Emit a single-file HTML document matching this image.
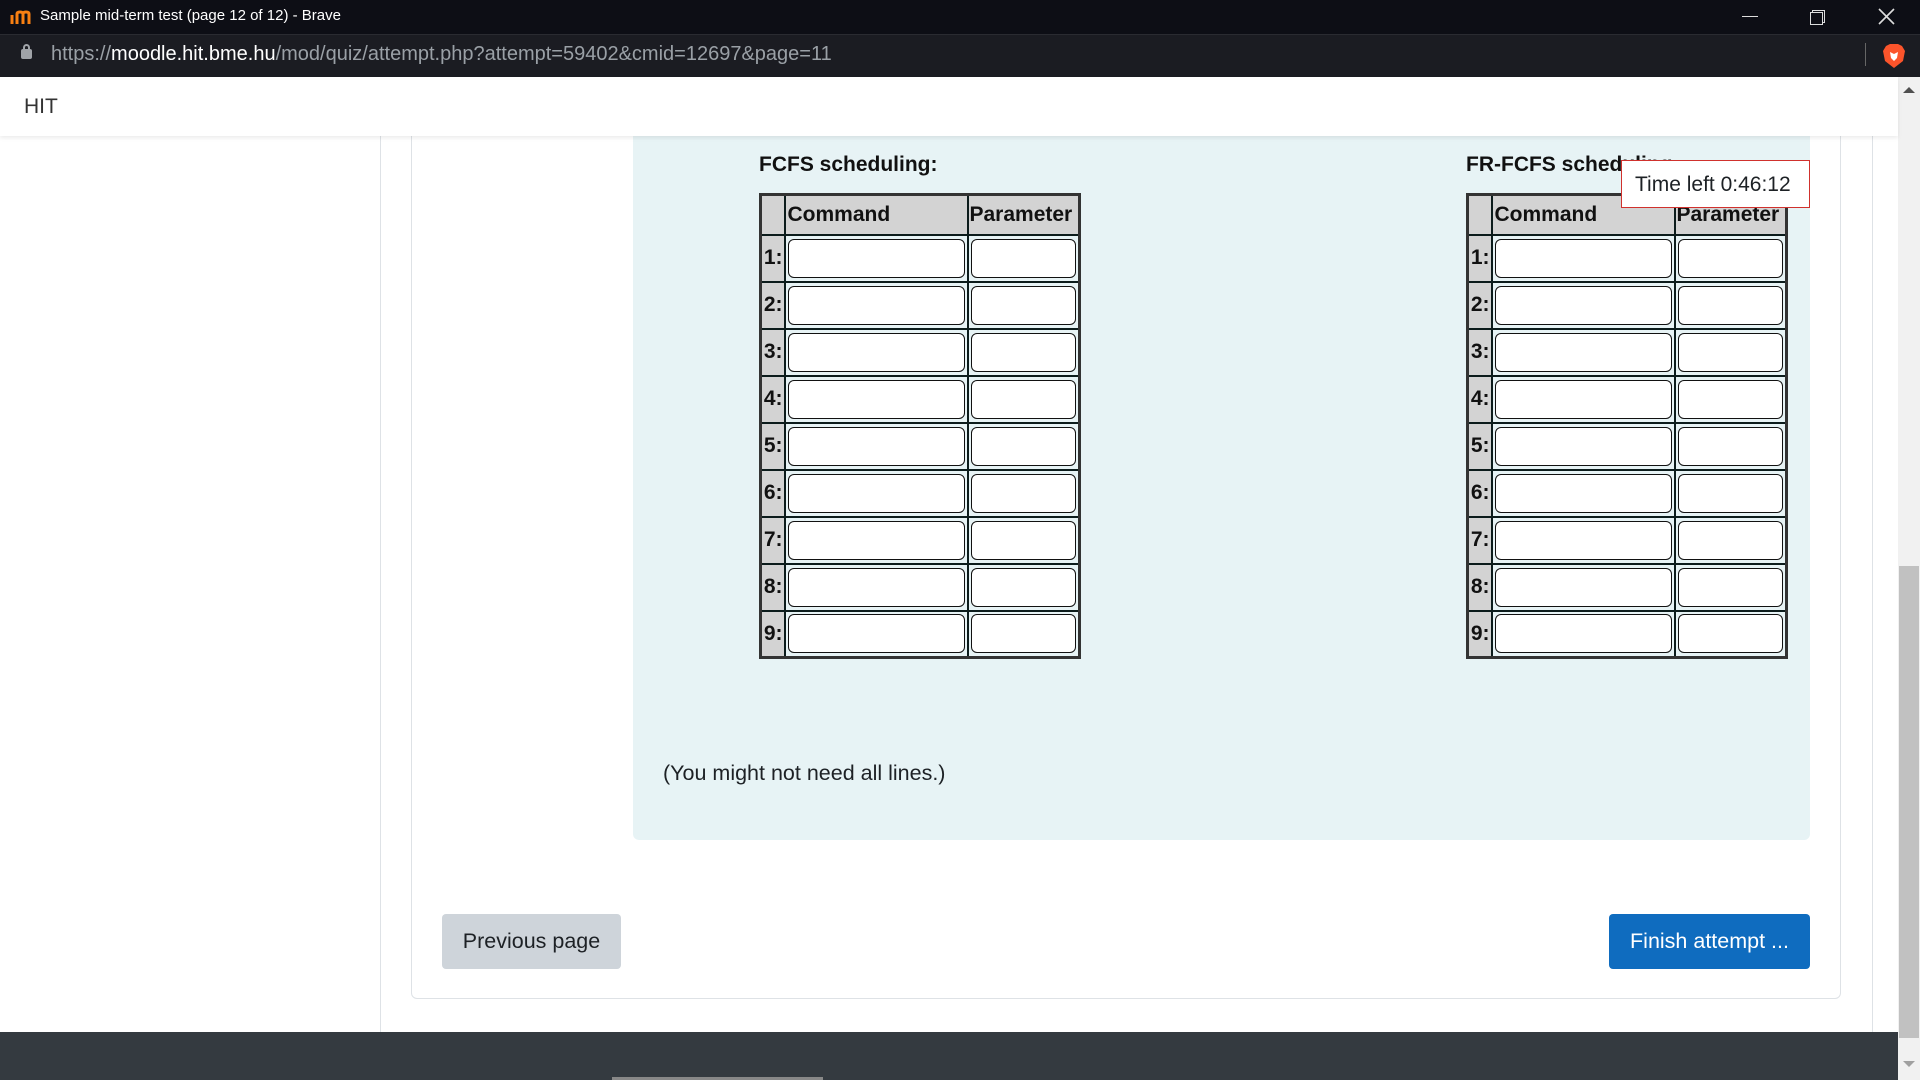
<!DOCTYPE html>
<html><head><meta charset="utf-8"><style>
*{box-sizing:border-box;margin:0;padding:0}
body{width:1920px;height:1080px;overflow:hidden;background:#fff;font-family:"Liberation Sans",sans-serif;position:relative;color:#1d2125}
.abs{position:absolute}
table.t{position:absolute;border-collapse:collapse;table-layout:fixed;border:3px solid #333;background:#e7f3f5}
table.t td,table.t th{border:2px solid #0c1c1c;padding:0}
table.t th{background:#d3d3d3;height:40px;font-size:21px;font-weight:bold;text-align:left;padding-left:2px;color:#111}
table.t td.n{background:#d3d3d3;font-size:21px;font-weight:bold;text-align:right;padding-right:1px;color:#111}
table.t td{height:47px}
.in{display:block;margin:2px 2px;height:39px;background:#fff;border:1.5px solid #111;border-radius:6px}
</style></head><body>
<div class="abs" style="left:0;top:0;width:1920px;height:34px;background:#0d0e15"></div>
<div class="abs" style="left:10px;top:9px;width:22px;height:16px;">
<svg width="22" height="16"><path d="M2 15V6M7 15V5q0-2 3-2t3 2v10M13 15V5q0-2 3-2t3 2v10" stroke="#f98012" stroke-width="3" fill="none"/></svg></div>
<div class="abs" style="left:40px;top:7px;color:#fff;font-size:15px">Sample mid-term test (page 12 of 12) - Brave</div>
<div class="abs" style="left:1742px;top:16px;width:16px;height:1px;background:#ddd"></div>
<div class="abs" style="left:1812px;top:10px;width:13px;height:13px;border:1.5px solid #ddd"></div>
<div class="abs" style="left:1810px;top:12px;width:13px;height:13px;border:1.5px solid #ddd;background:#0d0e15"></div>
<svg class="abs" style="left:1878px;top:8px" width="17" height="17"><path d="M1 1L16 16M16 1L1 16" stroke="#ddd" stroke-width="1.6"/></svg>
<div class="abs" style="left:0;top:34px;width:1920px;height:43px;background:#1b1c22;border-top:1px solid #2a2b31"></div>
<div class="abs" style="left:21px;top:49px;width:11px;height:10px;background:#a0a3a8;border-radius:2px"></div>
<div class="abs" style="left:23px;top:44px;width:7px;height:8px;border:2px solid #a0a3a8;border-bottom:none;border-radius:4px 4px 0 0"></div>
<div class="abs" style="left:51px;top:43px;font-size:20px;color:#9aa0a6">https://<span style="color:#fff">moodle.hit.bme.hu</span>/mod/quiz/attempt.php?attempt=59402&amp;cmid=12697&amp;page=11</div>
<div class="abs" style="left:1865px;top:43px;width:1px;height:23px;background:#666"></div>
<svg class="abs" style="left:1882px;top:43px" width="24" height="26"><path d="M4 3L8 1H16L20 3L23 8L21 18L12 25L3 18L1 8Z" fill="#fb542b"/><path d="M8 9l4 2 4-2-1 6-3 3-3-3z" fill="#fff"/></svg>
<div class="abs" style="left:0;top:77px;width:1898px;height:59px;background:#fff;box-shadow:0 2px 4px rgba(0,0,0,.08);z-index:2"></div>
<div class="abs" style="left:24px;top:95px;font-size:21px;color:#333;z-index:3">HIT</div>
<div class="abs" style="left:1898px;top:77px;width:22px;height:1003px;background:#f1f1f1"></div>
<div class="abs" style="left:1899px;top:566px;width:20px;height:472px;background:#c1c1c1"></div>
<svg class="abs" style="left:1903px;top:86px" width="12" height="8"><path d="M0 7L6 1L12 7Z" fill="#505050"/></svg>
<svg class="abs" style="left:1903px;top:1060px" width="12" height="8"><path d="M0 1L6 7L12 1Z" fill="#a0a0a0"/></svg>
<div class="abs" style="left:380px;top:136px;width:1px;height:896px;background:#dee2e6"></div>
<div class="abs" style="left:1872px;top:136px;width:1px;height:896px;background:#dee2e6"></div>
<div class="abs" style="left:411px;top:120px;width:1430px;height:879px;border:1px solid #dee2e6;border-radius:6px"></div>
<div class="abs" style="left:633px;top:120px;width:1177px;height:720px;background:#e7f3f5;border-radius:0 0 6px 6px"></div>
<div class="abs" style="left:759px;top:153px;font-size:21px;font-weight:bold;color:#111">FCFS scheduling:</div>
<div class="abs" style="left:1466px;top:153px;font-size:21px;font-weight:bold;color:#111">FR-FCFS scheduling:</div>

<table class="t" style="left:759px;top:193px;width:322px">
<colgroup><col style="width:24px"><col style="width:183px"><col></colgroup>
<tr><th></th><th>Command</th><th style="padding-left:1px">Parameter</th></tr>
<tr><td class="n">1:</td><td><span class="in"></span></td><td><span class="in"></span></td></tr>
<tr><td class="n">2:</td><td><span class="in"></span></td><td><span class="in"></span></td></tr>
<tr><td class="n">3:</td><td><span class="in"></span></td><td><span class="in"></span></td></tr>
<tr><td class="n">4:</td><td><span class="in"></span></td><td><span class="in"></span></td></tr>
<tr><td class="n">5:</td><td><span class="in"></span></td><td><span class="in"></span></td></tr>
<tr><td class="n">6:</td><td><span class="in"></span></td><td><span class="in"></span></td></tr>
<tr><td class="n">7:</td><td><span class="in"></span></td><td><span class="in"></span></td></tr>
<tr><td class="n">8:</td><td><span class="in"></span></td><td><span class="in"></span></td></tr>
<tr><td class="n">9:</td><td><span class="in"></span></td><td><span class="in"></span></td></tr>
</table>
<table class="t" style="left:1466px;top:193px;width:322px">
<colgroup><col style="width:24px"><col style="width:183px"><col></colgroup>
<tr><th></th><th>Command</th><th style="padding-left:1px">Parameter</th></tr>
<tr><td class="n">1:</td><td><span class="in"></span></td><td><span class="in"></span></td></tr>
<tr><td class="n">2:</td><td><span class="in"></span></td><td><span class="in"></span></td></tr>
<tr><td class="n">3:</td><td><span class="in"></span></td><td><span class="in"></span></td></tr>
<tr><td class="n">4:</td><td><span class="in"></span></td><td><span class="in"></span></td></tr>
<tr><td class="n">5:</td><td><span class="in"></span></td><td><span class="in"></span></td></tr>
<tr><td class="n">6:</td><td><span class="in"></span></td><td><span class="in"></span></td></tr>
<tr><td class="n">7:</td><td><span class="in"></span></td><td><span class="in"></span></td></tr>
<tr><td class="n">8:</td><td><span class="in"></span></td><td><span class="in"></span></td></tr>
<tr><td class="n">9:</td><td><span class="in"></span></td><td><span class="in"></span></td></tr>
</table>
<div class="abs" style="left:1621px;top:160px;width:189px;height:48px;background:#fff;border:1px solid #d0312d;font-size:21px;color:#1d2125;padding:12px 0 0 13px;z-index:4">Time left 0:46:12</div>

<div class="abs" style="left:663px;top:761px;font-size:21.5px;color:#1d2125">(You might not need all lines.)</div>

<div class="abs" style="left:442px;top:914px;width:179px;height:55px;background:#ced4da;border-radius:4px;font-size:21.5px;color:#1d2125;text-align:center;line-height:55px">Previous page</div>
<div class="abs" style="left:1609px;top:914px;width:201px;height:55px;background:#0f6cbf;border-radius:4px;font-size:21.5px;color:#fff;text-align:center;line-height:55px">Finish attempt ...</div>

<div class="abs" style="left:0;top:1032px;width:1898px;height:48px;background:#343a40"></div>
<div class="abs" style="left:612px;top:1077px;width:211px;height:3px;background:#888"></div>
</body></html>
